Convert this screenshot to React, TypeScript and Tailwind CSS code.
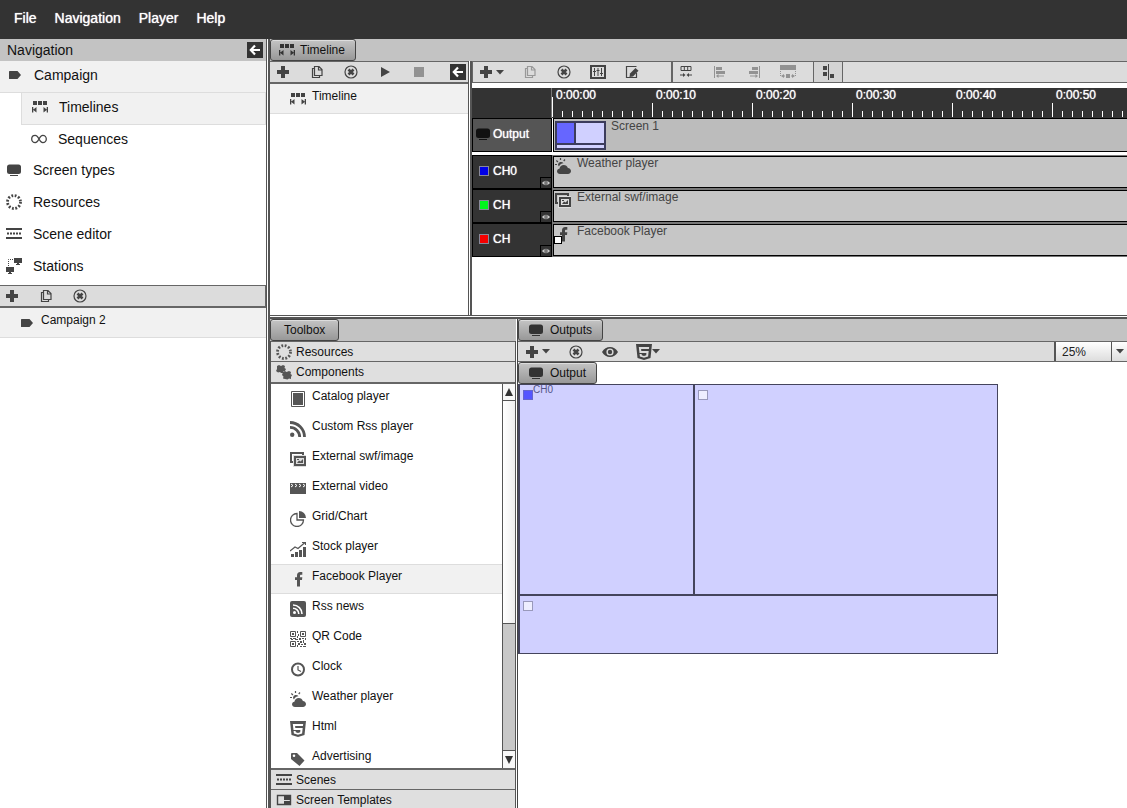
import type { ReactNode } from "react"

type IconProps = { className?: string }

function Svg({ className = "", children }: { className?: string; children: ReactNode }) {
    return (
        <svg viewBox="0 0 16 16" className={`size-4 shrink-0 ${className}`} fill="currentColor" aria-hidden="true">
            {children}
        </svg>
    )
}

const PlusIcon = () => (
    <Svg><path d="M6 2h4v4h4v4h-4v4H6v-4H2V6h4z" /></Svg>
)

const CaretIcon = () => (
    <svg viewBox="0 0 8 5" className="h-[5px] w-2 shrink-0" fill="currentColor" aria-hidden="true">
        <path d="M0 0h8L4 4.5z" />
    </svg>
)

const CopyIcon = ({ className }: IconProps) => (
    <Svg className={className}>
        <path d="M5.500 2.500h4.500l3 3v6H5.500zM9.500 2.500V6H13M5.500 4.500h-2v9h7v-2" fill="none" stroke="currentColor" strokeWidth="1.200" />
    </Svg>
)

const RemoveIcon = () => (
    <Svg>
        <circle cx="8" cy="8" r="6" fill="none" stroke="currentColor" strokeWidth="1.200" />
        <path d="M5.500 5.500l5 5M10.500 5.500l-5 5" stroke="currentColor" strokeWidth="2.600" />
    </Svg>
)

const PlayIcon = () => (
    <Svg><path d="M4 3l9 5-9 5z" /></Svg>
)

const StopIcon = () => (
    <Svg className="text-[#929292]"><path d="M3 3h10v10H3z" /></Svg>
)

const BackIcon = () => (
    <Svg className="bg-[#333] text-white">
        <path d="M13 8H4M8 3.500L3.800 8 8 12.500" fill="none" stroke="currentColor" strokeWidth="2.200" />
    </Svg>
)

const CampaignIcon = () => (
    <Svg><path d="M2.500 4h8L14 8l-3.500 4h-8q-.5 0-.5-.5v-7q0-.5.5-.5z" /></Svg>
)

const TimelineIcon = () => (
    <Svg>
        <path d="M1 2h4v4H1zM6 2h4v4H6zM11 2h4v4h-4zM0 8h1.300v5.500H0zM14.700 8H16v5.500h-1.300zM4.500 8v5.500L1 10.800zM11.500 8v5.500l3.500-2.700z" />
    </Svg>
)

const SequenceIcon = () => (
    <Svg>
        <path
            d="M8 8C6.800 5.600 5.700 4.300 4.200 4.300 2.200 4.300.7 5.900.7 8s1.500 3.700 3.500 3.700C5.700 11.700 6.800 10.400 8 8s2.300-3.700 3.800-3.700c2 0 3.500 1.600 3.500 3.700s-1.500 3.700-3.500 3.700C10.300 11.700 9.200 10.400 8 8z"
            fill="none"
            stroke="currentColor"
            strokeWidth="1.300"
        />
    </Svg>
)

const ScreenIcon = () => (
    <Svg>
        <rect x="1" y="2.500" width="14" height="9.500" rx="2.500" />
        <path d="M4 13h8v1H4z" />
    </Svg>
)

const ResourcesIcon = () => (
    <Svg>
        <circle cx="8" cy="8" r="6.500" fill="none" stroke="currentColor" strokeWidth="2.800" strokeDasharray="1.800 1.600" />
    </Svg>
)

const SceneIcon = () => (
    <Svg>
        <path d="M0 2h16v2H0zM0 11h16v2H0zM1 6.500h2v2H1zM4 6.500h2v2H4zM7 6.500h2v2H7zM10 6.500h2v2h-2zM13 6.500h2v2h-2z" />
    </Svg>
)

const StationsIcon = () => (
    <Svg>
        <path d="M8 0h8v5H8zM11 5h2v1h1v1h-4V6h1zM0 9h8v5H0zM3 14h2v1h1v1H2v-1h1z" />
        <path d="M2.500 8V1.500H8" fill="none" stroke="currentColor" strokeDasharray="1 1" />
    </Svg>
)

const MixerIcon = () => (
    <Svg>
        <path d="M1 2h14v12H1z" fill="none" stroke="currentColor" strokeWidth="2" />
        <path d="M4.500 4v8M8 4v8M11.500 4v8" stroke="currentColor" />
        <path d="M3 7h3v1H3zM6.500 6h3v1h-3zM10 9h3v1h-3z" />
    </Svg>
)

const EditIcon = () => (
    <Svg>
        <path d="M12.500 9v4.500h-10v-11h10" fill="none" stroke="currentColor" strokeWidth="1.200" />
        <path d="M6 9.500L11.500 4l3 2.800L9 12.500l-3.500.5z" />
    </Svg>
)

const FitIcon = () => (
    <Svg>
        <path d="M3 2.500h10v4H3zM6.300 2.500v4M9.700 2.500v4" fill="none" stroke="currentColor" />
        <path d="M2 10.500h3V9l2.500 2L5 13v-1.500H2zM14 10.500h-3V9l-2.500 2L11 13v-1.500h3z" />
    </Svg>
)

const AlignLeftIcon = () => (
    <Svg className="text-[#929292]">
        <path d="M2 2h1v12H2zM4 3h6v3H4zM4 7h9v3H4zM4 12l2.500-2v1.500H12v1H6.500V14z" />
    </Svg>
)

const AlignRightIcon = () => (
    <Svg className="text-[#929292]">
        <path d="M13 2h1v12h-1zM6 3h6v3H6zM3 7h9v3H3zM12 12l-2.500-2v1.500H4v1h5.500V14z" />
    </Svg>
)

const StretchIcon = () => (
    <Svg className="text-[#929292]">
        <path d="M0 1h16v5H0zM6 10h4v4H6zM1 12l3-2v1.500h1v1H4V14zM15 12l-3-2v1.500h-1v1h1V14z" />
        <path d="M.5 7v6M15.500 7v6" stroke="currentColor" strokeDasharray="1 1" />
    </Svg>
)

const SnapIcon = () => (
    <Svg>
        <path d="M8 0h1v16H8zM3 2h4v4H3zM3 8h4v4H3zM10 10h4v4h-4z" />
    </Svg>
)

const EyeIcon = () => (
    <Svg>
        <path fillRule="evenodd" d="M0 8c2-3.400 4.800-5 8-5s6 1.600 8 5c-2 3.400-4.800 5-8 5s-6-1.600-8-5zm8-3.600a3.600 3.600 0 100 7.200 3.600 3.600 0 000-7.200z" />
        <circle cx="8" cy="8" r="2.200" />
    </Svg>
)

const HtmlIcon = () => (
    <Svg>
        <path fillRule="evenodd" d="M0 0h16l-1.500 14L8 16l-6.500-2zM2.800 3l.7 6h6.900l-.2 2.200-2.200.7-2.200-.7L5.600 10h-2l.3 2.600L8 13.800l4.100-1.200L12.700 7H5.300L5.100 5h7.800l.3-2z" />
    </Svg>
)

const PuzzleIcon = () => (
    <Svg>
        <path d="M1 2l2-1 2 1 2-1 2 1-.5 2 1.500 1-1 2-2 .5L8 9H5L4 8 2 8.500 0 7l1-2z" />
        <path d="M7 8l2-1 1.500 1L13 7l2 1-.5 2L16 11l-1 2v2l-2-.5-1.500 1L9 15l-2-.5.5-2L6 11z" />
    </Svg>
)

const CatalogIcon = () => (
    <Svg>
        <path d="M1.500.5h13v15h-13z" fill="none" stroke="currentColor" />
        <path d="M3 2h10v12H3z" />
    </Svg>
)

const RssIcon = () => (
    <Svg>
        <circle cx="2.200" cy="13.800" r="2.200" />
        <path d="M0 6.300A9.700 9.700 0 019.700 16M0 1.500A14.500 14.500 0 0114.500 16" fill="none" stroke="currentColor" strokeWidth="2.800" />
    </Svg>
)

const ImagesIcon = () => (
    <Svg>
        <path d="M1 2h12v9H1z" fill="none" stroke="currentColor" strokeWidth="2" />
        <path d="M3 4h13v12H3z" fill="#ddd" />
        <path d="M5 6h10v8H5z" fill="none" stroke="currentColor" strokeWidth="2" />
        <path d="M7 12l2-2.500 1.500 1L13 8v4zM7 8h2v1H7z" />
    </Svg>
)

const VideoIcon = () => (
    <Svg>
        <path d="M0 2h16v11H0z" />
        <path d="M1 3l2 1.500L1 6M5 3l2 1.500L5 6M9 3l2 1.500L9 6M13 3l2 1.500L13 6" fill="none" stroke="#fff" />
    </Svg>
)

const PieIcon = () => (
    <Svg>
        <path d="M7 2.500A6.500 6.500 0 1013.500 9H7z" fill="none" stroke="currentColor" strokeWidth="1.300" />
        <path d="M9 0a7 7 0 017 7H9z" />
    </Svg>
)

const StockIcon = () => (
    <Svg>
        <path d="M1 13h3v3H1zM5 11h3v5H5zM9 9h3v7H9zM13 6h3v10h-3z" />
        <path d="M0 10l5-4 3 1.500L15 1.500M12 1.500h3.500V4" fill="none" stroke="currentColor" strokeWidth="1.200" />
    </Svg>
)

const FacebookIcon = () => (
    <Svg><path d="M7 15.500V9H5V6.200h2V4.400C7 2.300 8.100 1 10.300 1h2v2.800h-1.200c-.9 0-1.100.4-1.100 1.100v1.300h2.300L12 9h-2v6.500z" /></Svg>
)

const RssNewsIcon = () => (
    <Svg>
        <rect width="16" height="16" rx="2" />
        <circle cx="4.500" cy="11.500" r="1.500" fill="#fff" />
        <path d="M3 7.200A5.800 5.800 0 018.800 13M3 4a9 9 0 019 9" fill="none" stroke="#fff" strokeWidth="1.600" />
    </Svg>
)

const QrIcon = () => (
    <Svg>
        <path d="M.5.500h5v5h-5zM10.500.500h5v5h-5zM.5 10.500h5v5h-5z" fill="none" stroke="currentColor" />
        <path d="M2 2h2v2H2zM12 2h2v2h-2zM2 12h2v2H2zM7 0h1v2H7zM8 3h1v2H8zM7 5h1v2H7zM0 7h2v1H0zM3 7h3v1H3zM1 8h2v1H1zM5 8h3v1H5zM9 7h2v2H9zM12 7h2v1h-2zM15 7h1v2h-1zM7 10h2v1H7zM10 10h2v2h-2zM13 9h1v3h-1zM8 12h2v2H8zM7 14h1v2H7zM11 13h2v1h-2zM14 12h2v2h-2zM10 15h2v1h-2zM13 15h3v1h-3z" />
    </Svg>
)

const ClockIcon = () => (
    <Svg>
        <circle cx="8" cy="8.500" r="6" fill="none" stroke="currentColor" strokeWidth="2" />
        <path d="M8 5v4l3 1.500" fill="none" stroke="currentColor" strokeWidth="1.200" />
    </Svg>
)

const WeatherIcon = () => (
    <Svg>
        <path d="M5 16c-1.700 0-3-1.200-3-2.700 0-1.400 1-2.400 2.400-2.600C4.800 8.500 6.500 7 8.700 7c2 0 3.600 1.200 4.200 3 1.800.2 3.100 1.400 3.100 3s-1.300 3-3 3z" />
        <path d="M3 6.500a3 3 0 015.500-1.200C6.300 5.500 4.700 6.700 4 8.500 3.300 8 3 7.300 3 6.500z" />
        <path d="M0 6.500h2M1.300 2.500L3 4M5.500 0v2M10 1.500L8.700 3" stroke="currentColor" strokeWidth="1.200" />
    </Svg>
)

const TagIcon = () => (
    <Svg>
        <path fillRule="evenodd" d="M1 3q0-1 1-1l5 0 7.500 7.500-5 5.500L1 8zm3 .5a1.300 1.300 0 100 2.600 1.300 1.300 0 000-2.600z" />
    </Svg>
)

const TemplatesIcon = () => (
    <Svg>
        <path d="M1.500 3.500h13v9h-13z" fill="none" stroke="currentColor" strokeWidth="1.400" />
        <path d="M8 4h6v4H8zM8 9h6v3H8z" />
    </Svg>
)

const menu = ["File", "Navigation", "Player", "Help"]

const navItems = [
    { label: "Screen types", icon: <ScreenIcon /> },
    { label: "Resources", icon: <ResourcesIcon /> },
    { label: "Scene editor", icon: <SceneIcon /> },
    { label: "Stations", icon: <StationsIcon /> },
]

const components = [
    { label: "Catalog player", icon: <CatalogIcon /> },
    { label: "Custom Rss player", icon: <RssIcon /> },
    { label: "External swf/image", icon: <ImagesIcon /> },
    { label: "External video", icon: <VideoIcon /> },
    { label: "Grid/Chart", icon: <PieIcon /> },
    { label: "Stock player", icon: <StockIcon /> },
    { label: "Facebook Player", icon: <FacebookIcon />, active: true },
    { label: "Rss news", icon: <RssNewsIcon /> },
    { label: "QR Code", icon: <QrIcon /> },
    { label: "Clock", icon: <ClockIcon /> },
    { label: "Weather player", icon: <WeatherIcon /> },
    { label: "Html", icon: <HtmlIcon /> },
    { label: "Advertising", icon: <TagIcon /> },
]

const channels = [
    { name: "CH0", color: "bg-[#0000e6]", label: "Weather player", icon: <WeatherIcon /> },
    { name: "CH", color: "bg-[#00f51c]", label: "External swf/image", icon: <ImagesIcon /> },
    { name: "CH", color: "bg-[#f50000]", label: "Facebook Player", icon: <FacebookIcon />, handle: true },
]

// ruler labels, ten seconds apart
const marks = ["0:00:00", "0:00:10", "0:00:20", "0:00:30", "0:00:40", "0:00:50"]

function IconButton({ label, className = "", children }: { label: string; className?: string; children: ReactNode }) {
    return (
        <button type="button" aria-label={label} className={`flex shrink-0 items-center ${className}`}>
            {children}
        </button>
    )
}

function Tab({ children }: { children: ReactNode }) {
    return (
        <button
            type="button"
            className="flex h-[22px] items-center gap-[5px] rounded-[3px] border border-[#444] bg-linear-to-b from-[#c4c4c4] to-[#989898] px-2 shadow-[inset_0_1px_0_#ddd]"
        >
            {children}
        </button>
    )
}

function VSplitter() {
    return <div className="w-1 shrink-0 border-l border-r-2 border-[#555] bg-white" />
}

function Sidebar() {
    return (
        <aside className="flex w-[266px] shrink-0 flex-col">
            <div className="flex h-[22px] items-center justify-between bg-[#c3c3c3] pr-[3px] pl-[7px] text-sm">
                <h2>Navigation</h2>
                <IconButton label="Collapse navigation"><BackIcon /></IconButton>
            </div>
            <nav className="flex flex-col pb-px text-sm text-[#111]">
                <a href="#campaign" className="flex h-8 items-center gap-[11px] border-b border-[#ddd] bg-[#f1f1f1] pb-1 pl-[7px]">
                    <span className="text-[#444]"><CampaignIcon /></span>Campaign
                </a>
                <a href="#timelines" className="ml-[21px] flex h-8 items-center gap-[11px] border border-t-0 border-[#ddd] bg-[#f1f1f1] pb-1 pl-2.5">
                    <span className="text-[#444]"><TimelineIcon /></span>Timelines
                </a>
                <a href="#sequences" className="flex h-[31px] items-center gap-[11px] pb-1 pl-[31px]">
                    <span className="text-[#444]"><SequenceIcon /></span>Sequences
                </a>
                {navItems.map((item) => (
                    <a key={item.label} href="#nav" className="flex h-8 items-center gap-[11px] pb-1 pl-1.5">
                        <span className="text-[#444]">{item.icon}</span>{item.label}
                    </a>
                ))}
            </nav>
            <div className="flex h-[23px] items-center gap-[18px] border border-b-2 border-l-0 border-[#666] bg-[#dcdcdc] pl-1 text-[#444]">
                <IconButton label="Add campaign"><PlusIcon /></IconButton>
                <IconButton label="Copy campaign"><CopyIcon /></IconButton>
                <IconButton label="Remove campaign"><RemoveIcon /></IconButton>
            </div>
            <button type="button" className="flex h-[30px] items-start gap-1.5 border-b border-[#ddd] bg-[#f1f1f1] pl-[19px] leading-6">
                <span className="mt-[7px] text-[#444]"><CampaignIcon /></span>Campaign 2
            </button>
        </aside>
    )
}

function TimelineList() {
    return (
        <div className="flex w-[198px] shrink-0 flex-col">
            <div className="flex h-[23px] items-center gap-[18px] border-t border-b-2 border-[#666] bg-[#dcdcdc] pr-0.5 pl-[5px] text-[#444]">
                <IconButton label="Add timeline"><PlusIcon /></IconButton>
                <IconButton label="Copy timeline"><CopyIcon /></IconButton>
                <IconButton label="Remove timeline"><RemoveIcon /></IconButton>
                <IconButton label="Play"><PlayIcon /></IconButton>
                <IconButton label="Stop"><StopIcon /></IconButton>
                <IconButton label="Collapse list" className="ml-auto"><BackIcon /></IconButton>
            </div>
            <button type="button" className="flex h-[30px] items-start gap-1.5 border-b border-[#ddd] bg-[#f1f1f1] pl-5 leading-6">
                <span className="mt-[7px] text-[#444]"><TimelineIcon /></span>Timeline
            </button>
        </div>
    )
}

function Ruler() {
    return (
        <div className="flex h-[30px] bg-[#333] text-white">
            <div className="w-20 shrink-0 border-r border-[#777]" />
            <div className="flex min-w-0 flex-1 overflow-hidden">
                {marks.map((mark, m) => (
                    <div key={mark} className="flex w-[100px] shrink-0 flex-col justify-between">
                        <span className="pl-1 leading-[14px] [text-shadow:0_0_1px_#fff]">{mark}</span>
                        <div className="flex h-[15px] items-end pb-px">
                            <i className={`mr-[9px] w-px bg-white ${m === 0 ? "h-5" : "h-[14px]"}`} />
                            {Array.from({ length: 9 }, (_, i) => (
                                <i key={i} className="mr-[9px] h-[6px] w-px bg-white" />
                            ))}
                        </div>
                    </div>
                ))}
            </div>
        </div>
    )
}

function Timeline() {
    return (
        <div className="flex min-w-0 flex-1 flex-col">
            <div className="flex h-[22px] items-stretch border-y border-l border-[#666] bg-[#dcdcdc] text-[#444]">
                <div className="flex items-center gap-[18px] border-r-2 border-[#666] pr-[31px] pl-[5px]">
                    <IconButton label="Add item" className="w-[26px] gap-0.5"><PlusIcon /><CaretIcon /></IconButton>
                    <IconButton label="Copy item"><CopyIcon className="text-[#999]" /></IconButton>
                    <IconButton label="Remove item"><RemoveIcon /></IconButton>
                    <IconButton label="Properties"><MixerIcon /></IconButton>
                    <IconButton label="Edit"><EditIcon /></IconButton>
                </div>
                <div className="flex items-center gap-[18px] pr-[17px] pl-[5px]">
                    <IconButton label="Fit"><FitIcon /></IconButton>
                    <IconButton label="Align left"><AlignLeftIcon /></IconButton>
                    <IconButton label="Align right"><AlignRightIcon /></IconButton>
                    <IconButton label="Stretch"><StretchIcon /></IconButton>
                </div>
                <IconButton label="Snap" className="w-[30px] justify-center border-x border-[#666] bg-[#d4d4d4]"><SnapIcon /></IconButton>
            </div>
            <div className="mt-[5px]"><Ruler /></div>
            <div className="flex h-[34px]">
                <div className="flex w-20 shrink-0 items-center gap-0.5 border border-black bg-[#555] pb-0.5 pl-0.5 text-white [text-shadow:0_0_1px_#fff]">
                    <span className="text-[#111]"><ScreenIcon /></span>Output
                </div>
                <div className="ml-px flex flex-1 items-start gap-[5px] border border-r-0 border-black bg-[#bcbcbc] pl-px leading-[14px] text-[#444]">
                    <div className="mt-0.5 grid h-[29px] w-[51px] shrink-0 grid-cols-[17px_1fr] grid-rows-[20px_1fr] gap-0.5 border-2 border-[#3c3c5c] bg-[#3c3c5c]">
                        <div className="bg-[#66f]" />
                        <div className="bg-[#d0d0ff]" />
                        <div className="col-span-2 bg-[#d0d0ff]" />
                    </div>
                    Screen 1
                </div>
            </div>
            <div className="mt-[3px] flex flex-col">
                {channels.map((channel, i) => (
                    <div key={i} className="flex h-[34px] bg-[#777]">
                        <div className="flex w-20 shrink-0 border border-black bg-[#333] text-white [text-shadow:0_0_1px_#fff]">
                            <span className="flex flex-1 items-center gap-1 pb-0.5 pl-1.5">
                                <i className={`size-2.5 border border-[#889] ${channel.color}`} />
                                {channel.name}
                            </span>
                            <svg viewBox="0 0 11 11" className="size-[11px] self-end border-t border-l border-black bg-[#333]" fill="#ccc" aria-hidden="true">
                                <path d="M4 3v5L1 5.500zM5 3h1v5H5zM7 3v5l3-2.500z" />
                            </svg>
                        </div>
                        <div className="relative my-px ml-px flex flex-1 items-start gap-1.5 border border-r-0 border-black bg-[#c6c6c6] pl-px leading-3 text-[#444]">
                            <span className="mt-px">{channel.icon}</span>
                            {channel.label}
                            {channel.handle && <i className="absolute top-[11px] left-0 size-2 border border-black bg-white" />}
                        </div>
                    </div>
                ))}
            </div>
        </div>
    )
}

function Toolbox() {
    return (
        <div className="flex w-[246px] shrink-0 flex-col">
            <div className="flex h-[22px] bg-[#c3c3c3]"><Tab><span className="px-[5px]">Toolbox</span></Tab></div>
            <div className="flex min-h-0 flex-1 flex-col border-x border-[#555]">
                <button type="button" className="flex h-[21px] shrink-0 items-center gap-1 border-t border-b border-[#666] bg-[#dfdfdf] pl-[5px]">
                    <span className="text-[#555]"><ResourcesIcon /></span>Resources
                </button>
                <button type="button" className="flex h-[22px] shrink-0 items-center gap-1 border-b-2 border-[#666] bg-[#dfdfdf] pl-[5px]">
                    <span className="text-[#555]"><PuzzleIcon /></span>Components
                </button>
                <div className="flex min-h-0 flex-1">
                    <ul className="flex-1 overflow-hidden">
                        {components.map((item) => (
                            <li key={item.label}>
                                <button
                                    type="button"
                                    className={`flex h-[30px] w-full items-start gap-1.5 pl-[19px] leading-6 ${item.active ? "bg-[#f1f1f1] shadow-[inset_0_1px_0_#ddd,inset_0_-1px_0_#ddd]" : ""}`}
                                >
                                    <span className="mt-[7px] text-[#555]">{item.icon}</span>{item.label}
                                </button>
                            </li>
                        ))}
                    </ul>
                    <div className="flex w-[13px] shrink-0 flex-col border-l border-[#555] bg-[#c8c8c8] text-[#333]">
                        <button type="button" aria-label="Scroll up" className="flex h-[17px] items-center justify-center border-b border-[#555] bg-[#f8f8f8]">
                            <svg viewBox="0 0 8 8" className="size-2" fill="currentColor" aria-hidden="true"><path d="M4 0l4 8H0z" /></svg>
                        </button>
                        <div className="h-[223px] border-b border-[#555] bg-linear-to-r from-white to-[#eee]" />
                        <button type="button" aria-label="Scroll down" className="mt-auto flex h-[18px] items-center justify-center border-t border-[#555] bg-[#f8f8f8]">
                            <svg viewBox="0 0 8 8" className="size-2" fill="currentColor" aria-hidden="true"><path d="M4 8l4-8H0z" /></svg>
                        </button>
                    </div>
                </div>
                <button type="button" className="flex h-[22px] shrink-0 items-center gap-1 border-t-2 border-b border-[#666] bg-[#dfdfdf] pl-[5px]">
                    <span className="text-[#444]"><SceneIcon /></span>Scenes
                </button>
                <button type="button" className="flex h-[18px] shrink-0 items-center gap-1 bg-[#dfdfdf] pt-0.5 pl-[5px]">
                    <span className="text-[#444]"><TemplatesIcon /></span>Screen Templates
                </button>
            </div>
        </div>
    )
}

function Outputs() {
    return (
        <div className="flex min-w-0 flex-1 flex-col">
            <div className="flex h-[22px] bg-[#c3c3c3]"><Tab><span className="px-px text-[#333]"><ScreenIcon /></span><span className="pr-0.5">Outputs</span></Tab></div>
            <div className="flex h-[21px] items-center gap-[18px] border-y border-[#666] bg-[#dcdcdc] pl-1.5 text-[#444]">
                <IconButton label="Add output" className="w-[26px] gap-0.5"><PlusIcon /><CaretIcon /></IconButton>
                <IconButton label="Remove output"><RemoveIcon /></IconButton>
                <IconButton label="Preview"><EyeIcon /></IconButton>
                <IconButton label="Html preview"><HtmlIcon /><CaretIcon /></IconButton>
                <div className="relative ml-auto flex self-stretch">
                    <select aria-label="Zoom" className="w-[73px] appearance-none border-l-2 border-[#555] bg-linear-to-b from-white to-[#ddd] pl-1.5 text-[#222]">
                        <option>25%</option>
                        <option>50%</option>
                        <option>100%</option>
                    </select>
                    <span className="pointer-events-none absolute inset-y-0 right-0 flex w-4 items-center justify-center border-l border-[#555]">
                        <CaretIcon />
                    </span>
                </div>
            </div>
            <div className="flex"><Tab><span className="px-px text-[#333]"><ScreenIcon /></span><span className="pr-0.5">Output</span></Tab></div>
            <div className="grid h-[270px] w-[480px] grid-cols-[173px_1fr] grid-rows-[209px_1fr] gap-0.5 border border-l-2 border-[#44445c] bg-[#44445c] text-[10px] leading-[10px] text-[#555588]">
                <div className="flex items-start bg-[#d0d0ff] pl-[3px]">
                    <i className="mt-[5px] size-2.5 border border-[#66c] bg-[#55f]" />CH0
                </div>
                <div className="bg-[#d0d0ff] pt-[5px] pl-[3px]">
                    <i className="block size-2.5 border border-[#99b] bg-[#eef]" />
                </div>
                <div className="col-span-2 bg-[#d0d0ff] pt-[5px] pl-[3px]">
                    <i className="block size-2.5 border border-[#99b] bg-[#eef]" />
                </div>
            </div>
        </div>
    )
}

export default function App() {
    return (
        <div className="flex h-screen flex-col overflow-hidden bg-white font-['Liberation_Sans',Arial,sans-serif] text-xs text-[#111]">
            <header className="flex h-[39px] shrink-0 items-center gap-[18px] bg-[#333] px-3.5 pb-[3px] text-sm text-white">
                {menu.map((item) => (
                    <button key={item} type="button" className="[text-shadow:0_0_1px_#fff]">{item}</button>
                ))}
            </header>
            <div className="flex min-h-0 flex-1">
                <Sidebar />
                <VSplitter />
                <main className="flex min-w-0 flex-1 flex-col">
                    <section className="flex h-[276px] shrink-0 flex-col">
                        <div className="flex h-[22px] shrink-0 bg-[#c3c3c3]">
                            <Tab><span className="text-[#333]"><TimelineIcon /></span><span className="pr-0.5">Timeline</span></Tab>
                        </div>
                        <div className="flex min-h-0 flex-1">
                            <TimelineList />
                            <VSplitter />
                            <Timeline />
                        </div>
                    </section>
                    <div className="h-1 shrink-0 border-t border-b-2 border-[#555] bg-white" />
                    <section className="flex min-h-0 flex-1">
                        <Toolbox />
                        <div className="w-0.5 shrink-0 border-r border-[#444] bg-white" />
                        <Outputs />
                    </section>
                </main>
            </div>
        </div>
    )
}
